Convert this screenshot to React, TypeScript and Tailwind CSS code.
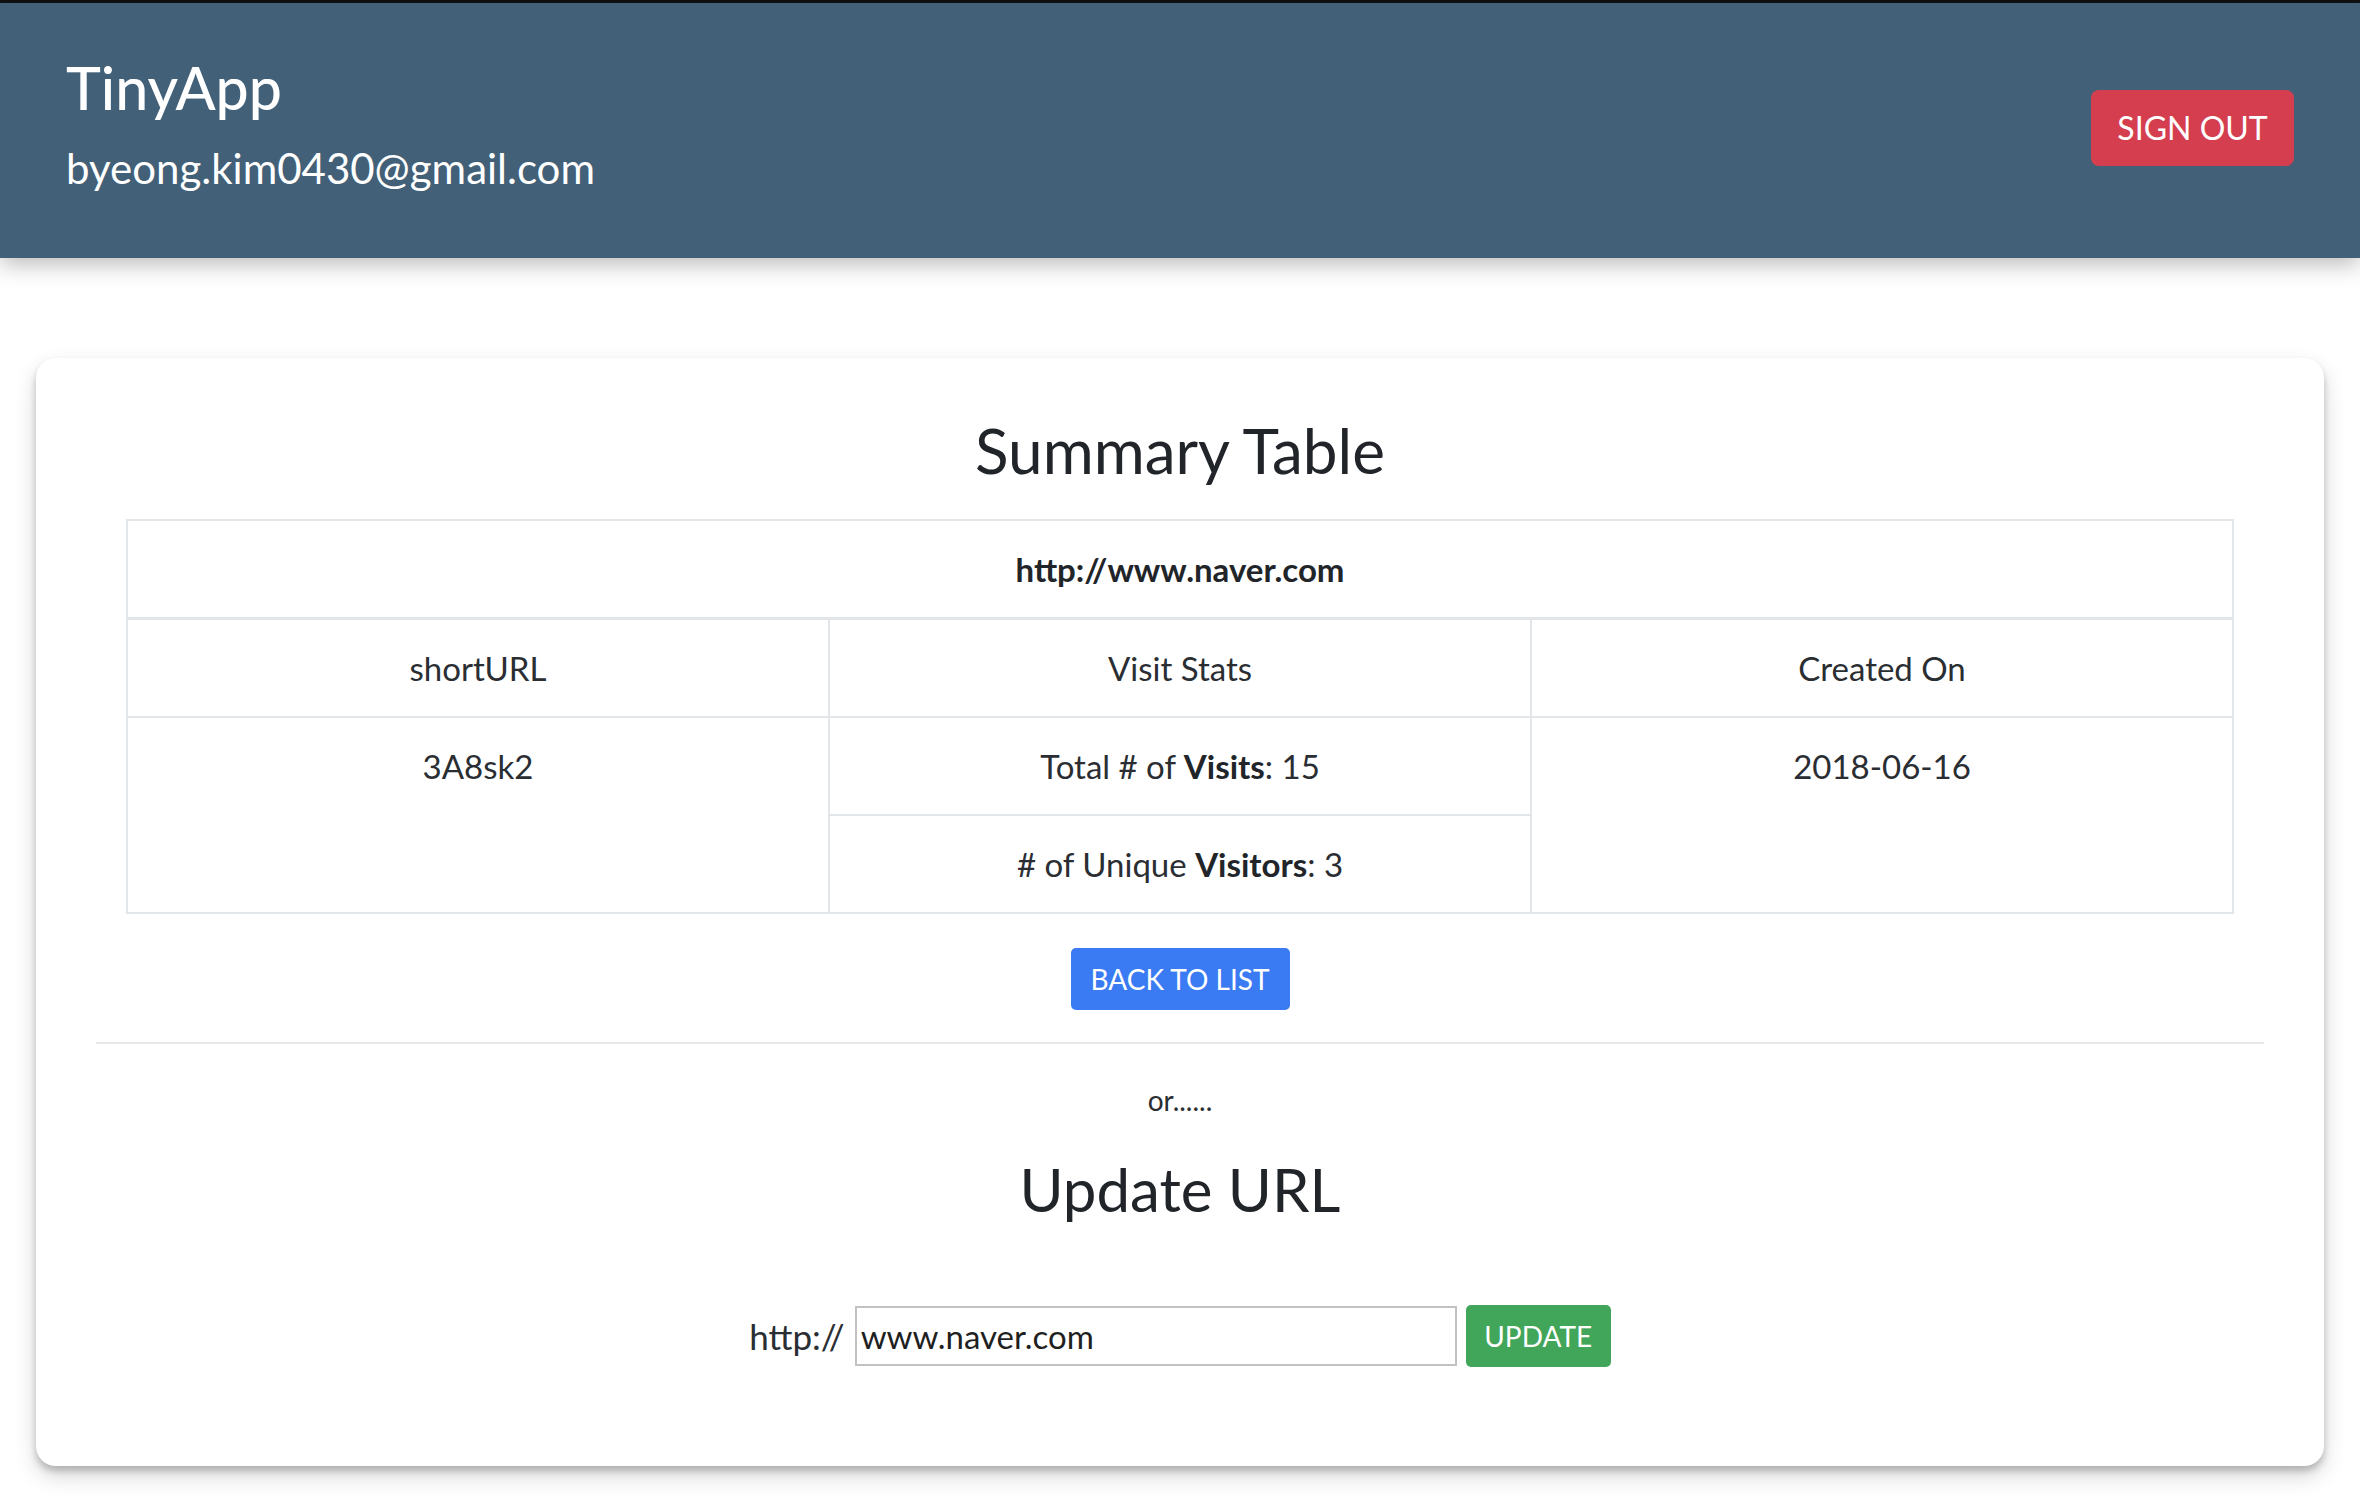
import React from "react";

export default function App() {
  const cell =
    "border-2 border-[#e3e6e9] text-center align-top py-[25px] leading-[46px] text-[33px] font-normal text-[#2a2e33]";
  return (
    <div className="min-h-[1506px] bg-white font-['Lato',sans-serif] text-[#212529]">
      <div className="h-[3px] bg-[#111]" />
      <header className="relative z-10 flex h-[255px] items-center justify-between bg-[#426078] px-[66px] shadow-[0_6px_22px_rgba(0,0,0,0.28)]">
        <div className="mb-[15px] flex flex-col">
          <h1 className="text-[59px] font-medium leading-[58px] text-white">TinyApp</h1>
          <p className="mt-[31px] text-[42px] leading-[40px] text-white">byeong.kim0430@gmail.com</p>
        </div>
        <button className="mb-[6px] h-[76px] w-[203px] rounded-[8px] bg-[#d43e4e] text-[32px] leading-none text-white">
          SIGN OUT
        </button>
      </header>

      <main className="px-[36px] pt-[100px]">
        <section className="flex flex-col items-center rounded-[20px] bg-white px-[60px] pb-[99px] pt-[60px] shadow-[0_10px_22px_rgba(0,0,0,0.16),0_5px_7px_rgba(0,0,0,0.2)]">
          <h2 className="text-[62px] font-normal leading-[64px] text-[#212529]">Summary Table</h2>

          <div className="mt-[37px] w-full px-[30px]">
            <table className="w-full table-fixed border-collapse">
              <thead>
                <tr>
                  <th
                    colSpan={3}
                    className="border-2 border-b-[3px] border-[#e3e6e9] py-[25px] text-center text-[33px] font-bold leading-[46px] text-[#212529]"
                  >
                    http://www.naver.com
                  </th>
                </tr>
              </thead>
              <tbody>
                <tr>
                  <td className={cell}>shortURL</td>
                  <td className={cell}>Visit Stats</td>
                  <td className={cell}>Created On</td>
                </tr>
                <tr>
                  <td rowSpan={2} className={cell}>
                    3A8sk2
                  </td>
                  <td className={cell}>
                    Total # of <span className="font-bold text-[#212529]">Visits</span>: 15
                  </td>
                  <td rowSpan={2} className={cell}>
                    2018-06-16
                  </td>
                </tr>
                <tr>
                  <td className={cell}>
                    # of Unique <span className="font-bold text-[#212529]">Visitors</span>: 3
                  </td>
                </tr>
              </tbody>
            </table>
          </div>

          <button className="mt-[34px] h-[62px] w-[219px] rounded-[5px] bg-[#3a7af2] text-[28px] leading-none text-white">
            BACK TO LIST
          </button>

          <hr className="mt-[32px] w-full border-0 border-t-2 border-[#e8e8e8]" />

          <p className="mt-[38px] text-[28px] leading-[36px] text-[#2a2e33]">or......</p>

          <h2 className="mt-[39px] text-[60px] font-normal leading-[64px] text-[#212529]">Update URL</h2>

          <form className="mt-[84px] flex items-center gap-[10px]" onSubmit={(e) => e.preventDefault()}>
            <span className="text-[35px] leading-none text-[#2a2e33]">http://</span>
            <input
              defaultValue="www.naver.com"
              className="h-[60px] w-[602px] border-2 border-[#c2c2c2] bg-white px-[4px] text-[33px] text-[#1f1f1f] outline-none"
            />
            <button className="ml-[-1px] h-[62px] w-[145px] rounded-[5px] bg-[#41a55a] text-[28px] leading-none text-white">
              UPDATE
            </button>
          </form>
        </section>
      </main>
    </div>
  );
}
